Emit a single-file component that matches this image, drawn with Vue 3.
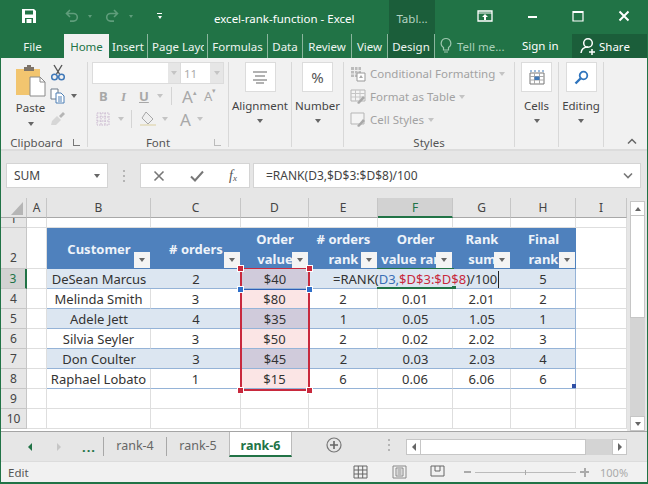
<script setup>
const columns = ['A', 'B', 'C', 'D', 'E', 'F', 'G', 'H', 'I']
const headers = [
  { cls: 'col-b', lines: ['Customer'] },
  { cls: 'col-c', lines: ['# orders'] },
  { cls: 'col-d', lines: ['Order', 'value'] },
  { cls: 'col-e', lines: ['# orders', 'rank'] },
  { cls: 'col-f', lines: ['Order', 'value rank'] },
  { cls: 'col-g', lines: ['Rank', 'sum'] },
  { cls: 'col-h', lines: ['Final', 'rank'] }
]
const rows = [
  { n: 3, name: 'DeSean Marcus', orders: 2, value: '$40', rank: '', vr: '', sum: '', final: 5, band: true, editing: true },
  { n: 4, name: 'Melinda Smith', orders: 3, value: '$80', rank: 2, vr: '0.01', sum: '2.01', final: 2 },
  { n: 5, name: 'Adele Jett', orders: 4, value: '$35', rank: 1, vr: '0.05', sum: '1.05', final: 1, band: true },
  { n: 6, name: 'Silvia Seyler', orders: 3, value: '$50', rank: 2, vr: '0.02', sum: '2.02', final: 3 },
  { n: 7, name: 'Don Coulter', orders: 3, value: '$45', rank: 2, vr: '0.03', sum: '2.03', final: 4, band: true },
  { n: 8, name: 'Raphael Lobato', orders: 1, value: '$15', rank: 6, vr: '0.06', sum: '6.06', final: 6 }
]
const tabs = [
  { label: 'File', w: 63 },
  { label: 'Home', w: 45, active: true },
  { label: 'Insert', w: 39, sep: true },
  { label: 'Page Layout', w: 60, sep: true, clip: true },
  { label: 'Formulas', w: 60, sep: true },
  { label: 'Data', w: 35, sep: true },
  { label: 'Review', w: 49, sep: true },
  { label: 'View', w: 36, sep: true },
  { label: 'Design', w: 47, sep: true, dark: true }
]
const emptyCols = ['col-a', 'col-b', 'col-c', 'col-d', 'col-e', 'col-f', 'col-g', 'col-h', 'col-i']
</script>

<template>
  <div class="app">
    <header class="titlebar">
      <div class="qat">
        <svg class="save" width="16" height="16" viewBox="0 0 16 16"><path d="M1 1h12l2 2v12H1z" fill="#fff"/><path d="M4 2.500h8v4H4z" fill="#217346"/><path d="M4 10h8v5H4z" fill="#217346"/><path d="M5.500 11h5v4h-5z" fill="#fff"/></svg>
        <svg class="undo" width="14" height="14" viewBox="0 0 14 14"><path d="M5 1 1.500 4.500 5 8M2 4.500h6.500a3.800 3.800 0 0 1 0 7.600H5" fill="none" stroke="#5f9d7b" stroke-width="1.600"/></svg>
        <i class="mini-caret dim c1"></i>
        <svg class="redo" width="14" height="14" viewBox="0 0 14 14"><path d="M9 1l3.500 3.500L9 8M12 4.500H5.500a3.800 3.800 0 0 0 0 7.600H9" fill="none" stroke="#5f9d7b" stroke-width="1.600"/></svg>
        <i class="mini-caret dim c2"></i>
        <span class="customize"><b></b><i class="mini-caret"></i></span>
      </div>
      <div class="doc-title">excel-rank-function - Excel</div>
      <div class="context-tab">Tabl...</div>
      <div class="win">
        <svg width="16" height="12" viewBox="0 0 16 12"><path d="M1 1h14v10H1z" fill="none" stroke="#fff" stroke-width="1.300"/><path d="M1 3h14" stroke="#fff"/><path d="M8 4 5 7h2v3h2V7h2z" fill="#fff"/></svg>
        <svg width="12" height="12" viewBox="0 0 12 12"><path d="M1 7h9" stroke="#fff" stroke-width="2"/></svg>
        <svg width="12" height="12" viewBox="0 0 12 12"><path d="M1 1.500h10v9.500H1z" fill="none" stroke="#fff" stroke-width="1.200"/><path d="M1 2h10" stroke="#fff" stroke-width="2"/></svg>
        <svg width="12" height="12" viewBox="0 0 12 12"><path d="m1.500 1.500 9 9m0-9-9 9" stroke="#fff" stroke-width="2"/></svg>
      </div>
    </header>

    <nav class="tabbar">
      <div v-for="t in tabs" :key="t.label" class="tab" :class="{ active: t.active, sep: t.sep, dark: t.dark, clip: t.clip }" :style="{ width: t.w + 'px' }">
        <span>{{ t.label }}</span>
      </div>
      <div class="tell">
        <svg width="14" height="18" viewBox="0 0 14 18"><path d="M7 1.500a4.800 4.800 0 0 0-2.500 8.900V13h5v-2.600A4.800 4.800 0 0 0 7 1.500zM5 15h4" fill="none" stroke="#9fc8b0" stroke-width="1.200"/></svg>
        <span>Tell me...</span>
      </div>
      <div class="signin">Sign in</div>
      <div class="share">
        <svg width="17" height="18" viewBox="0 0 17 18"><circle cx="8" cy="6" r="4.300" fill="none" stroke="#fff" stroke-width="1.500"/><path d="M1 16c.5-4 3-6 7-6M12 12v6M9 15h6" fill="none" stroke="#fff" stroke-width="1.500"/></svg>
        <span>Share</span>
      </div>
    </nav>

    <section class="ribbon">
      <div class="group g-clip">
        <div class="g-body clip-body">
          <div class="paste">
            <svg width="30" height="33" viewBox="0 0 30 33"><path d="M0 5h24v26H0z" fill="#f2c56f"/><path d="M8 3h3V1h4v2h3v4H8z" fill="#7d7368"/><path d="M14 13h10l5 5v14H14z" fill="#fff" stroke="#8a8a8a"/><path d="M24 13v5h5" fill="none" stroke="#8a8a8a"/></svg>
            <span>Paste</span>
            <i class="caret"></i>
          </div>
          <div class="clip-tools">
            <svg width="16" height="17" viewBox="0 0 16 17"><path d="m4 1 5.500 9M12 1 6.500 10" stroke="#555" stroke-width="1.400"/><circle cx="4.500" cy="13" r="2.800" fill="none" stroke="#3f78b8" stroke-width="1.500"/><circle cx="11.500" cy="13" r="2.800" fill="none" stroke="#3f78b8" stroke-width="1.500"/></svg>
            <div class="copy-row">
              <svg width="16" height="16" viewBox="0 0 16 16"><path d="M1 1h7v10H1z" fill="#fff" stroke="#6c7a89"/><path d="M6 5h5l3 3v7H6z" fill="#fff" stroke="#4c7fb5"/><path d="M8 9h4M8 11h4M8 13h4" stroke="#4c7fb5"/></svg>
              <i class="caret dark-caret"></i>
            </div>
            <svg width="16" height="15" viewBox="0 0 16 15"><path d="m9 5 4-4 2 2-4 4z" fill="#b5b5b5"/><path d="m2 10 5-5 4 4-5 5H1z" fill="#d6d6d6"/></svg>
          </div>
        </div>
        <div class="g-label">Clipboard<em class="launch"></em></div>
      </div>

      <div class="group g-font">
        <div class="g-body font-body">
          <div class="font-inputs">
            <div class="fi-name"><i class="caret light"></i></div>
            <div class="fi-size"><span>11</span><i class="caret light"></i></div>
          </div>
          <div class="font-row r2">
            <b class="gl">B</b><i class="gl serif">I</i><u class="gl">U</u><i class="caret light"></i><s class="vsep"></s>
            <span class="gl big">A<sup>▴</sup></span><span class="gl small">A<sup>▾</sup></span>
          </div>
          <div class="font-row r3">
            <svg width="14" height="14" viewBox="0 0 14 14"><path d="M1 1h12v12H1zM5 1v12M9 1v12M1 5h12M1 9h12" fill="none" stroke="#c9b7cf" stroke-dasharray="1.500 1"/></svg>
            <i class="caret light"></i><s class="vsep"></s>
            <svg width="18" height="16" viewBox="0 0 18 16"><path d="m7 1 7 7-5 5-6-6z" fill="#efefef" stroke="#a8a8a8"/><path d="M1 14h16" stroke="#e6e0c8" stroke-width="2"/></svg>
            <i class="caret light"></i>
            <span class="gl big">A</span><i class="caret light"></i>
          </div>
        </div>
        <div class="g-label">Font<em class="launch faded"></em></div>
      </div>

      <div class="group g-align">
        <div class="big-btn">
          <div class="icon-box"><svg width="16" height="14" viewBox="0 0 16 14"><path d="M1 2h14M3 6h10M1 10h14M4 13h8" stroke="#666" stroke-width="1.200"/></svg></div>
          <span>Alignment</span><i class="caret dark-caret"></i>
        </div>
      </div>

      <div class="group g-num">
        <div class="big-btn">
          <div class="icon-box pct">%</div>
          <span>Number</span><i class="caret dark-caret"></i>
        </div>
      </div>

      <div class="group g-styles">
        <div class="g-body styles-body">
          <div class="style-row">
            <svg width="16" height="16" viewBox="0 0 16 16"><path d="M1 1h10v10H1z" fill="#bcbcbc"/><path d="M1 4.500h10M1 8h10M4.500 1v10M8 1v10" stroke="#eee"/><path d="M7 7h8v8H7z" fill="#fff" stroke="#999"/><path d="M9 12l2-3 2 3z" fill="#aaa"/></svg>
            <span>Conditional Formatting</span><i class="caret light"></i>
          </div>
          <div class="style-row">
            <svg width="16" height="16" viewBox="0 0 16 16"><path d="M1 1h14v11H1z" fill="#f4f4f4" stroke="#b5b5b5"/><path d="M1 4.500h14M1 8h14M5.500 1v11M10 1v11" stroke="#c6c6c6"/><path d="m7 14 6-7 2 2-6 6z" fill="#a9a9a9"/></svg>
            <span>Format as Table</span><i class="caret light"></i>
          </div>
          <div class="style-row">
            <svg width="16" height="16" viewBox="0 0 16 16"><path d="M1 1h13v11H1z" fill="#f4f4f4" stroke="#b5b5b5"/><path d="m7 14 6-7 2 2-6 6z" fill="#a9a9a9"/></svg>
            <span>Cell Styles</span><i class="caret light"></i>
          </div>
        </div>
        <div class="g-label">Styles</div>
      </div>

      <div class="group g-cells">
        <div class="big-btn">
          <div class="icon-box"><svg width="16" height="17" viewBox="0 0 16 17"><path d="M1 2h14" stroke="#3f78b8" stroke-dasharray="2 2"/><path d="M1 4h14v11H1z" fill="#fff" stroke="#777"/><path d="M1 7.500h14M1 11h14M5.500 4v11M10.500 4v11" stroke="#aaa"/><path d="M5.500 7.500h5V11h-5z" fill="#3f78b8"/></svg></div>
          <span>Cells</span><i class="caret dark-caret"></i>
        </div>
      </div>

      <div class="group g-edit">
        <div class="big-btn">
          <div class="icon-box"><svg width="15" height="15" viewBox="0 0 15 15"><circle cx="9.500" cy="5.500" r="3.800" fill="none" stroke="#2f74bd" stroke-width="1.800"/><path d="m6.500 8.500-5 5" stroke="#2f74bd" stroke-width="2.400"/></svg></div>
          <span>Editing</span><i class="caret dark-caret"></i>
        </div>
      </div>

      <div class="collapse">
        <svg width="10" height="7" viewBox="0 0 10 7"><path d="m1 5.500 4-4 4 4" fill="none" stroke="#666" stroke-width="1.500"/></svg>
      </div>
    </section>

    <section class="formula">
      <div class="namebox"><span>SUM</span><i class="caret dark-caret"></i></div>
      <div class="grip"><b></b><b></b><b></b></div>
      <div class="fbtns">
        <svg width="12" height="12" viewBox="0 0 12 12"><path d="m1.500 1.500 9 9m0-9-9 9" stroke="#777" stroke-width="1.600"/></svg>
        <svg width="14" height="12" viewBox="0 0 14 12"><path d="m1 6.500 4 4 8-9" fill="none" stroke="#777" stroke-width="2"/></svg>
        <span class="fx">f<sub>x</sub></span>
      </div>
      <div class="finput">
        <span>=RANK(D3,$D$3:$D$8)/100</span>
        <svg width="10" height="7" viewBox="0 0 10 7"><path d="m1 1.500 4 4 4-4" fill="none" stroke="#777" stroke-width="1.600"/></svg>
      </div>
    </section>

    <section class="sheet">
      <div class="grid-wrap">
        <div class="grid">
          <div class="corner"><svg width="12" height="13" viewBox="0 0 12 13"><path d="M12 0v13H0z" fill="#b5b5b5"/></svg></div>
          <div v-for="c in columns" :key="c" class="colhead" :class="{ selected: c === 'F' }">{{ c }}</div>

          <div class="rowhead r-one"><span>1</span></div>
          <div v-for="c in emptyCols" :key="'r1' + c" class="empty" :class="c"></div>

          <div class="rowhead bottom">2</div>
          <div class="empty col-a"></div>
          <div v-for="h in headers" :key="h.cls" class="thead" :class="h.cls">
            <span v-for="l in h.lines" :key="l">{{ l }}</span>
            <button class="filter" type="button"><i class="caret dark-caret"></i></button>
          </div>
          <div class="empty col-i"></div>

          <template v-for="r in rows" :key="r.n">
            <div class="rowhead" :class="{ active: r.n === 3 }">{{ r.n }}</div>
            <div class="empty col-a"></div>
            <div class="td" :class="{ band: r.band }">{{ r.name }}</div>
            <div class="td" :class="{ band: r.band }">{{ r.orders }}</div>
            <div class="td value" :class="{ band: r.band }">{{ r.value }}</div>
            <div v-if="r.editing" class="td band edit-cell"><span>=RANK(<em class="ref-b">D3,</em><em class="ref-r">$D$3:$D$8</em>)/100</span></div>
            <template v-else>
              <div class="td" :class="{ band: r.band }">{{ r.rank }}</div>
              <div class="td" :class="{ band: r.band }">{{ r.vr }}</div>
              <div class="td" :class="{ band: r.band }">{{ r.sum }}</div>
            </template>
            <div class="td last" :class="{ band: r.band }">{{ r.final }}</div>
            <div class="empty col-i"></div>
          </template>

          <template v-for="n in [9, 10]" :key="n">
            <div class="rowhead">{{ n }}</div>
            <div v-for="c in emptyCols" :key="n + c" class="empty" :class="c"></div>
          </template>
        </div>

        <div class="grid overlay">
          <div class="range">
            <b class="h tl"></b><b class="h tr"></b><b class="h bl"></b><b class="h br"></b>
            <div class="range-first"><b class="h blue bl2"></b><b class="h blue br2"></b></div>
          </div>
          <div class="sel-cell"><b></b></div>
          <div class="end-mark"><b></b></div>
        </div>
      </div>

      <aside class="vscroll">
        <div class="sbtn"><i class="up"></i></div>
        <div class="vthumb"></div>
        <div class="vtrack"></div>
        <div class="sbtn"><i class="caret dark-caret"></i></div>
      </aside>
    </section>

    <section class="sheettabs">
      <div class="nav">
        <i class="tri-l green"></i>
        <i class="tri-r pale"></i>
        <strong>...</strong>
      </div>
      <div class="stab sep">rank-4</div>
      <div class="stab sep">rank-5</div>
      <div class="stab current">rank-6</div>
      <div class="add"><svg width="16" height="16" viewBox="0 0 16 16"><circle cx="8" cy="8" r="7" fill="none" stroke="#777" stroke-width="1.200"/><path d="M8 4v8M4 8h8" stroke="#666" stroke-width="1.600"/></svg></div>
      <div class="grip h-grip"><b></b><b></b><b></b></div>
      <div class="hscroll">
        <div class="hbtn"><i class="tri-l dark"></i></div>
        <div class="hthumb"></div>
        <div class="htrack"></div>
        <div class="hbtn"><i class="tri-r dark"></i></div>
      </div>
    </section>

    <footer class="status">
      <span class="mode">Edit</span>
      <svg class="st-normal" width="15" height="14" viewBox="0 0 15 14"><path d="M1 1h13v12H1zM1 5h13M1 9h13M5.300 1v12M9.700 1v12" fill="none" stroke="#666"/></svg>
      <svg class="st-page" width="15" height="14" viewBox="0 0 15 14"><path d="M1 1h13v12H1z" fill="none" stroke="#888"/><path d="M4 3h7v8H4zM5.500 5h4M5.500 7h4M5.500 9h4" fill="none" stroke="#888"/></svg>
      <svg class="st-break" width="15" height="14" viewBox="0 0 15 14"><path d="M1 1h13v10H1zM5 1v5h5V1" fill="none" stroke="#666"/></svg>
      <div class="zoom">
        <i class="zm"></i>
        <div class="slider"><b></b></div>
        <i class="zp"></i>
        <span>100%</span>
      </div>
    </footer>
  </div>
</template>

<style scoped>
.app {
  box-sizing: border-box;
  width: 648px;
  height: 484px;
  display: flex;
  flex-direction: column;
  background: #e6e6e6;
  border: solid #217346;
  border-width: 0 1px 2px;
  overflow: hidden;
  font-family: "Noto Sans", "Open Sans", sans-serif;
  font-size: 11.500px;
  color: #444;
}
em { font-style: normal; }
s { text-decoration: none; }

.caret {
  display: inline-block;
  width: 0;
  height: 0;
  border: 3.500px solid transparent;
  border-top: 4px solid #bbb;
  border-bottom: 0;
}
.caret.dark-caret { border-top-color: #666; }
.caret.light { border-top-color: #c4c4c4; }

.titlebar {
  height: 34px;
  flex: none;
  display: flex;
  background: #217346;
  color: #fff;
}
.qat {
  width: 213px;
  flex: none;
  display: flex;
  align-items: center;
  position: relative;
}
.save { margin: -3px 0 0 20px; }
.undo { margin: -3px 0 0 28px; }
.redo { margin: -3px 0 0 13px; }
.mini-caret {
  width: 0;
  height: 0;
  border: 2.500px solid transparent;
  border-top: 3px solid #fff;
  border-bottom: 0;
}
.mini-caret.dim { border-top-color: #5f9d7b; margin: -2px 0 0 0; }
.c1 { margin-left: 9px !important; }
.c2 { margin-left: 10px !important; }
.customize {
  display: flex;
  flex-direction: column;
  align-items: center;
  gap: 2px;
  margin: -3px 0 0 24px;
}
.customize b { width: 5px; height: 1px; background: #fff; }
.doc-title {
  width: 175px;
  flex: none;
  font-size: 11.500px;
  line-height: 38px;
  white-space: nowrap;
}
.context-tab {
  width: 46px;
  flex: none;
  background: #1b5e3a;
  color: #b5d3c2;
  text-align: center;
  font-size: 11.500px;
  line-height: 38px;
}
.win {
  flex: 1;
  display: flex;
  align-items: center;
  padding: 0 17px 0 42px;
  justify-content: space-between;
  margin-top: -2px;
}

.tabbar {
  height: 24px;
  flex: none;
  display: flex;
  background: #217346;
  color: #fff;
  font-size: 11.500px;
}
.tab {
  flex: none;
  box-sizing: border-box;
  display: flex;
  align-items: center;
  justify-content: center;
  white-space: nowrap;
  overflow: hidden;
  color: #eef5f1;
}
.tab.sep { border-right: 1px solid #8ab59d; }
.tab.active {
  background: #f1f1f1;
  color: #217346;
}
.tab.dark { background: #1b5e3a; }
.tab.clip { justify-content: flex-start; padding-left: 4px; }
.tab.clip span { display: block; width: 52px; overflow: hidden; }
.tell {
  width: 87px;
  flex: none;
  display: flex;
  align-items: center;
  gap: 4px;
  padding-left: 4px;
  box-sizing: border-box;
  color: #a9d0b9;
}
.signin {
  width: 50px;
  flex: none;
  line-height: 24px;
}
.share {
  flex: 1;
  display: flex;
  align-items: center;
  gap: 2px;
  padding-left: 8px;
  background: #1b5e3a;
}

.ribbon {
  height: 93px;
  flex: none;
  box-sizing: border-box;
  padding-top: 4px;
  display: flex;
  align-items: flex-start;
  background: #f1f1f1;
  border-bottom: 2px solid #dcdcdc;
}
.group {
  flex: none;
  height: 85px;
  box-sizing: border-box;
  border-right: 1px solid #d8d8d8;
  display: flex;
  flex-direction: column;
  position: relative;
}
.g-clip { width: 87px; }
.g-font { width: 141px; }
.g-align { width: 63px; }
.g-num { width: 52px; }
.g-styles { width: 171px; }
.g-cells { width: 44px; }
.g-edit { width: 45px; }
.g-body { height: 72px; flex: none; }
.g-label {
  flex: none;
  height: 13px;
  line-height: 13px;
  text-align: center;
  color: #555;
  font-size: 11.500px;
  position: relative;
  margin-top: 2px;
}
.launch {
  position: absolute;
  right: 7px;
  top: 3px;
  width: 6px;
  height: 6px;
  border-left: 1px solid #777;
  border-bottom: 1px solid #777;
}
.launch.faded { border-color: #bbb; }
.clip-body { display: flex; padding: 2px 0 0 10px; box-sizing: border-box; }
.g-clip .g-label { padding-right: 15px; }
.paste {
  width: 39px;
  display: flex;
  flex-direction: column;
  align-items: center;
  color: #444;
}
.paste span { margin-top: 3px; line-height: 16px; }
.paste .caret { margin-top: 6px; border-top-color: #666; }
.clip-tools {
  display: flex;
  flex-direction: column;
  gap: 7px;
}
.copy-row { display: flex; align-items: center; gap: 5px; }

.font-body { padding: 0 0 0 4px; box-sizing: border-box; }
.font-inputs {
  width: 132px;
  height: 22px;
  box-sizing: border-box;
  display: flex;
  background: #fff;
  border: 1px solid #dcdcdc;
}
.fi-name {
  width: 88px;
  display: flex;
  align-items: center;
  justify-content: flex-end;
  border-right: 1px solid #dcdcdc;
  box-sizing: border-box;
  background: linear-gradient(90deg, #fff 75px, #e6e6e6 75px);
  padding-right: 3px;
}
.fi-size {
  flex: 1;
  display: flex;
  align-items: center;
  justify-content: space-between;
  padding: 0 3px;
  color: #aaa;
  background: linear-gradient(90deg, #fff 29px, #e6e6e6 29px);
}
.font-row {
  display: flex;
  align-items: center;
  height: 20px;
  color: #aaa;
}
.r2 { margin-top: 2px; padding-left: 7px; }
.r3 { margin-top: 3px; padding-left: 4px; }
.gl {
  font-size: 13px;
  font-weight: 700;
  color: #a8a8a8;
  text-decoration: none;
  line-height: 1;
}
.r2 > .gl:nth-child(1) { width: 22px; }
.r2 > .gl.serif { width: 18px; font-family: "Liberation Serif", serif; font-style: italic; }
.r2 > u.gl { width: 18px; text-decoration: underline; }
.vsep {
  width: 1px;
  height: 18px;
  background: #d4d4d4;
  margin: 0 10px 0 8px;
}
.gl.big { font-size: 17px; font-weight: 400; width: 22px; }
.gl.small { font-size: 13px; font-weight: 400; }
.gl sup { font-size: 7px; vertical-align: 8px; line-height: 0; }
.r3 svg:first-child { margin-right: 7px; }
.r3 svg + .caret + .vsep { margin-left: 7px; margin-right: 7px; }
.r3 .caret { margin-left: 1px; }
.r3 svg:nth-of-type(2) { margin-right: 4px; }
.r3 .big { margin-left: 12px; width: 16px; }

.big-btn {
  display: flex;
  flex-direction: column;
  align-items: center;
  color: #444;
}
.icon-box {
  box-sizing: border-box;
  width: 31px;
  height: 30px;
  background: #fff;
  border: 1px solid #dcdcdc;
  display: flex;
  align-items: center;
  justify-content: center;
}
.big-btn span { margin-top: 6px; line-height: 16px; font-size: 11.500px; white-space: nowrap; }
.big-btn .caret { margin-top: 5px; }
.pct { font-size: 15px; color: #555; }

.styles-body { padding: 0 0 0 6px; box-sizing: border-box; }
.style-row {
  height: 23px;
  display: flex;
  align-items: center;
  gap: 4px;
  color: #a2a2a2;
  font-size: 11.500px;
  white-space: nowrap;
}
.collapse { flex: 1; align-self: flex-end; text-align: right; padding: 0 10px 3px 0; line-height: 10px; }

.formula {
  height: 47px;
  flex: none;
  box-sizing: border-box;
  padding: 12px 6px 10px 5px;
  display: flex;
  background: #e6e6e6;
}
.namebox {
  width: 102px;
  flex: none;
  box-sizing: border-box;
  display: flex;
  align-items: center;
  justify-content: space-between;
  padding: 0 7px;
  background: #fff;
  border: 1px solid #d4d4d4;
  font-size: 12px;
}
.grip {
  display: flex;
  flex-direction: column;
  justify-content: center;
  gap: 3px;
}
.grip b { width: 2px; height: 2px; background: #b5b5b5; }
.formula .grip { width: 32px; flex: none; align-items: center; }
.fbtns {
  width: 110px;
  flex: none;
  box-sizing: border-box;
  display: flex;
  align-items: center;
  justify-content: space-between;
  padding: 0 12px;
  background: #fff;
  border: 1px solid #d4d4d4;
}
.fx { font-family: "Liberation Serif", serif; font-style: italic; font-size: 14px; color: #555; }
.fx sub { font-size: 9px; vertical-align: -1px; }
.finput {
  flex: 1;
  margin-left: 3px;
  box-sizing: border-box;
  display: flex;
  align-items: center;
  justify-content: space-between;
  padding: 0 7px 0 12px;
  background: #fff;
  border: 1px solid #d4d4d4;
  font-size: 12px;
  color: #444;
}

.sheet {
  height: 234px;
  flex: none;
  display: flex;
  background: #e6e6e6;
  border-bottom: 1px solid #a5a5a5;
  box-sizing: border-box;
}
.grid-wrap {
  width: 626px;
  flex: none;
  position: relative;
  overflow: hidden;
}
.grid {
  width: 626px;
  display: grid;
  grid-template-columns: 26px 20px 104px 90px 68px 69px 75px 58px 65px 51px;
  grid-template-rows: 20px 10px 41px repeat(8, 20px) 3px;
  background: #fff;
  font-size: 13px;
  color: #333;
}
.grid.overlay {
  position: absolute;
  inset: 0;
  background: none;
  pointer-events: none;
}
.corner {
  background: #e6e6e6;
  border-right: 1px solid #c6c6c6;
  border-bottom: 1px solid #a8a8a8;
  display: flex;
  align-items: flex-end;
  justify-content: flex-end;
  padding: 0 3px 2px 0;
  box-sizing: border-box;
}
.colhead {
  background: #e6e6e6;
  border-right: 1px solid #c6c6c6;
  border-bottom: 1px solid #a8a8a8;
  box-sizing: border-box;
  text-align: center;
  line-height: 19px;
  font-size: 12px;
  color: #444;
}
.colhead.selected {
  background: #d2d2d2;
  color: #217346;
  border-bottom: 2px solid #217346;
}
.rowhead {
  background: #e6e6e6;
  box-sizing: border-box;
  border-right: 1px solid #c6c6c6;
  border-bottom: 1px solid #c6c6c6;
  text-align: center;
  line-height: 20px;
  font-size: 12px;
  color: #444;
  overflow: hidden;
}
.rowhead.r-one span { display: block; line-height: 5px; margin-top: -2px; }
.rowhead.bottom { display: flex; align-items: flex-end; justify-content: center; }
.rowhead.active {
  background: #d2d2d2;
  color: #217346;
  border-right: 2px solid #217346;
}
.empty {
  box-sizing: border-box;
  border-right: 1px solid #dedede;
  border-bottom: 1px solid #dedede;
}
.thead {
  background: #4f81bd;
  color: #eef3f9;
  font-weight: 700;
  font-size: 13px;
  line-height: 20px;
  display: flex;
  flex-direction: column;
  align-items: center;
  justify-content: center;
  position: relative;
  white-space: nowrap;
  overflow: hidden;
}
.filter {
  position: absolute;
  right: 1px;
  bottom: 1px;
  width: 16px;
  height: 16px;
  padding: 0;
  border: 0;
  background: #f4f4f4;
  display: flex;
  align-items: center;
  justify-content: center;
}
.td {
  box-sizing: border-box;
  background: #fff;
  border-right: 1px solid #dedede;
  border-bottom: 1px solid #95b3d7;
  text-align: center;
  line-height: 21px;
  white-space: nowrap;
}
.td.band { background: #dce6f1; border-right: 0; }
.td.last { border-right: 1px solid #95b3d7; }
.td.value { background: #fbe5e5; }
.td.value.band { background: #d0cbdb; }
.edit-cell {
  grid-column: span 3;
  text-align: left;
  padding-left: 24px;
}
.edit-cell span { border-right: 1px solid #222; padding-right: 1px; display: inline-block; line-height: 17px; }
.ref-b { color: #3a6fb5; }
.ref-r { color: #c8293d; }

.range {
  grid-column: 5;
  grid-row: 4 / 10;
  border: 2px solid #c8293d;
  border-top-width: 1px;
  position: relative;
  box-sizing: border-box;
  margin: -1px -1px -2px -1px;
}
.range-first {
  height: 21px;
  box-sizing: border-box;
  border-bottom: 1px solid #2f5fb5;
  position: relative;
}
.h {
  position: absolute;
  width: 5px;
  height: 5px;
  background: #c8293d;
  border: 1px solid #fff;
}
.h.blue { background: #2f6fc9; }
.tl { left: -5px; top: -4px; }
.tr { right: -5px; top: -4px; }
.bl { left: -5px; bottom: -5px; }
.br { right: -5px; bottom: -5px; }
.bl2 { left: -5px; bottom: -4px; }
.br2 { right: -5px; bottom: -4px; }
.sel-cell {
  grid-column: 7;
  grid-row: 4;
  border-bottom: 2px solid #217346;
  border-top: 1px solid #217346;
  margin: -1px -1px 0;
  position: relative;
  box-sizing: border-box;
}
.sel-cell b {
  position: absolute;
  right: -2px;
  bottom: -2px;
  width: 4px;
  height: 3px;
  background: #217346;
}
.end-mark { grid-column: 9; grid-row: 9; position: relative; }
.end-mark b {
  position: absolute;
  right: 0;
  bottom: 1px;
  width: 4px;
  height: 4px;
  background: #2f4fa5;
}

.vscroll {
  flex: 1;
  display: flex;
  flex-direction: column;
  padding: 3px 2px 0 3px;
}
.sbtn {
  height: 15px;
  flex: none;
  box-sizing: border-box;
  background: #fff;
  border: 1px solid #c6c6c6;
  display: flex;
  align-items: center;
  justify-content: center;
}
.up {
  width: 0;
  height: 0;
  border: 3.500px solid transparent;
  border-bottom: 4px solid #666;
  border-top: 0;
}
.vthumb { height: 102px; flex: none; box-sizing: border-box; background: #fff; border: 1px solid #c6c6c6; border-top: 0; }
.vtrack { flex: 1; background: #d4d4d4; }

.sheettabs {
  height: 29px;
  flex: none;
  display: flex;
  background: #e6e6e6;
}
.nav {
  width: 102px;
  flex: none;
  display: flex;
  align-items: center;
  padding-left: 27px;
  box-sizing: border-box;
}
.nav strong { color: #217346; margin-left: 21px; letter-spacing: 1px; font-size: 13px; }
.tri-l, .tri-r {
  width: 0;
  height: 0;
  border: 4px solid transparent;
}
.tri-l { border-right: 4px solid #666; border-left: 0; }
.tri-r { border-left: 4px solid #666; border-right: 0; }
.tri-l.green { border-right-color: #217346; }
.tri-r.pale { border-left-color: #c6c6c6; margin-left: 25px; }
.stab {
  width: 63px;
  flex: none;
  box-sizing: border-box;
  text-align: center;
  line-height: 28px;
  font-size: 12.500px;
  color: #666;
  position: relative;
}
.stab.sep { border-left: 1px solid #a8a8a8; margin: 5px 0; line-height: 18px; height: 19px; }
.stab.current {
  background: #fff;
  color: #217346;
  font-weight: 700;
  border-bottom: 2px solid #217346;
  border-left: 1px solid #bbb;
  border-right: 1px solid #bbb;
  height: 25px;
  line-height: 27px;
}
.add { width: 90px; flex: none; display: flex; align-items: center; padding: 0 0 3px 34px; box-sizing: border-box; }
.h-grip { width: 13px; flex: none; align-items: center; padding-bottom: 3px; box-sizing: border-box; }
.hscroll {
  flex: 1;
  display: flex;
  height: 16px;
  margin: 7px 20px 0 11px;
}
.hbtn {
  width: 15px;
  flex: none;
  box-sizing: border-box;
  background: #fff;
  border: 1px solid #c6c6c6;
  display: flex;
  align-items: center;
  justify-content: center;
}
.hthumb { width: 165px; flex: none; background: #fff; box-sizing: border-box; border: 1px solid #c6c6c6; border-left: 0; }
.htrack { flex: 1; background: #d4d4d4; }

.status {
  flex: 1;
  display: flex;
  align-items: center;
  background: #f1f1f1;
  border-top: 1px solid #dcdcdc;
  font-size: 11.500px;
  color: #555;
}
.mode { width: 352px; padding-left: 7px; box-sizing: border-box; flex: none; }
.st-normal { flex: none; }
.st-page { margin-left: 24px; flex: none; }
.st-break { margin-left: 23px; flex: none; }
.zoom { flex: 1; display: flex; align-items: center; padding-left: 19px; }
.zm { width: 7px; height: 2px; background: #aaa; flex: none; }
.zp {
  width: 9px;
  height: 9px;
  flex: none;
  background: linear-gradient(#aaa, #aaa) center / 9px 2px no-repeat, linear-gradient(#aaa, #aaa) center / 2px 9px no-repeat;
  margin-left: 4px;
}
.slider {
  width: 101px;
  height: 1px;
  background: #bbb;
  margin-left: 4px;
  position: relative;
}
.slider b { position: absolute; left: 50px; top: -2px; width: 1px; height: 5px; background: #aaa; }
.zoom span { margin-left: 11px; color: #aaa; font-size: 11px; }
</style>

<style>
html, body { margin: 0; padding: 0; overflow: hidden; }
</style>
